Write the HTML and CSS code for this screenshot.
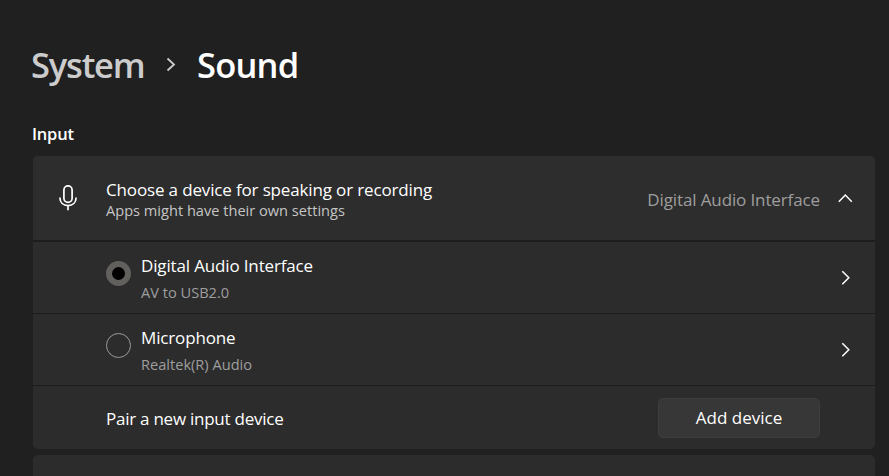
FILE: index.html
```
<!DOCTYPE html>
<html lang="en">
<head>
    <meta charset="UTF-8">
    <meta name="viewport" content="width=device-width, initial-scale=1.0">
    <title>System - Sound</title>
    <link rel="stylesheet" href="styles.css">
</head>
<body>
    <nav class="breadcrumb">
        <span class="crumb">System</span>
        <svg class="crumb-arrow" viewBox="0 0 10 16"><path d="M1.5 1.5 L8 7.5 L1.5 13.5"/></svg>
        <h1 class="crumb current">Sound</h1>
    </nav>

    <h2 class="section-title">Input</h2>

    <div class="card">
        <div class="row row-header">
            <svg class="mic" viewBox="0 0 20 28">
                <rect x="5.9" y="1.9" width="8.2" height="16.4" rx="4.1"/>
                <path d="M1.9 13.5 C1.9 18.6 5.4 21.6 10 21.6 C14.6 21.6 18.1 18.6 18.1 13.5 M10 21.6 V26.3"/>
            </svg>
            <div class="text">
                <div class="title">Choose a device for speaking or recording</div>
                <div class="subtitle">Apps might have their own settings</div>
            </div>
            <span class="selected">Digital Audio Interface</span>
            <svg class="chevron" viewBox="0 0 16 16"><path d="M1.8 11.7 L8.3 5 L14.8 11.7"/></svg>
        </div>

        <div class="row row-device">
            <span class="radio checked"></span>
            <div class="text">
                <div class="title">Digital Audio Interface</div>
                <div class="detail">AV to USB2.0</div>
            </div>
            <svg class="chevron" viewBox="0 0 16 16"><path d="M5.3 1.2 L11.8 7.7 L5.3 14.2"/></svg>
        </div>

        <div class="row row-device">
            <span class="radio"></span>
            <div class="text">
                <div class="title">Microphone</div>
                <div class="detail">Realtek(R) Audio</div>
            </div>
            <svg class="chevron" viewBox="0 0 16 16"><path d="M5.3 1.2 L11.8 7.7 L5.3 14.2"/></svg>
        </div>

        <div class="row row-pair">
            <div class="title pair">Pair a new input device</div>
            <button class="btn">Add device</button>
        </div>
    </div>

    <div class="card next-card"></div>
</body>
</html>
```
FILE: styles.css
```
:root {
    --bg: #202020;
    --card: #2c2c2c;
    --line: #1d1d1d;
    --text: #ffffff;
    --muted: #9e9e9e;
}

* {
    margin: 0;
    padding: 0;
    box-sizing: border-box;
}

body {
    height: 476px;
    overflow: hidden;
    padding: 41px 14px 0 32px;
    background-color: var(--bg);
    color: var(--text);
    font-family: 'Open Sans', 'Noto Sans', sans-serif;
    font-size: 17px;
    white-space: nowrap;
}

svg {
    display: block;
    flex: none;
    fill: none;
    stroke: #fff;
    stroke-width: 1.5;
}

.breadcrumb {
    display: flex;
    align-items: center;
    height: 48px;
}

.crumb {
    width: 135px;
    margin-left: -1px;
    font-size: 34.5px;
    font-weight: 600;
    line-height: 48px;
    letter-spacing: -1.2px;
    color: #cccccc;
}

.crumb.current {
    width: auto;
    margin-left: 0;
    letter-spacing: -0.8px;
    color: var(--text);
}

.crumb-arrow {
    width: 10px;
    height: 16px;
    margin-right: 21px;
    stroke: #cccccc;
    stroke-width: 1.8;
}

.section-title {
    margin: 33px 0 10px;
    font-size: 16.5px;
    font-weight: 600;
    line-height: 24px;
    letter-spacing: -0.2px;
}

.card {
    margin-left: 1px;
    background-color: var(--card);
    border-radius: 5px;
}

.row {
    display: flex;
    align-items: center;
    padding: 0 22px 0 73px;
}

.row-header {
    height: 86px;
    padding-left: 25px;
    border-bottom: 2px solid var(--line);
    background-color: #2d2d2d;
    border-radius: 5px 5px 0 0;
}

.row-device {
    height: 72px;
    border-bottom: 1px solid var(--line);
}

.row-pair {
    height: 63px;
    padding-right: 55px;
    justify-content: space-between;
}

.mic {
    width: 20px;
    height: 28px;
    margin-right: 28px;
    stroke-width: 1.7;
}

.text {
    flex: 1;
}

.title {
    line-height: 24px;
    letter-spacing: -0.15px;
}

.title.pair {
    padding-top: 2px;
    letter-spacing: -0.25px;
}

.subtitle {
    margin-top: -2px;
    font-size: 14.6px;
    line-height: 20px;
    color: #c5c5c5;
}

.row-header .text {
    padding-top: 1px;
}

.row-device .text {
    padding-top: 1px;
}

.detail {
    margin-top: 3px;
    font-size: 14.6px;
    line-height: 22px;
    color: var(--muted);
}

.selected {
    margin-right: 17px;
    padding-top: 2px;
    letter-spacing: -0.12px;
    color: var(--muted);
}

.chevron {
    width: 16px;
    height: 16px;
}

.radio {
    width: 25px;
    height: 25px;
    margin: -8px 10px 0 0;
    border: 1.5px solid #9a9a9a;
    border-radius: 50%;
}

.radio.checked {
    border: 6px solid #62605d;
    background-color: #000;
}

.btn {
    width: 162px;
    height: 40px;
    border: 1px solid #3d3d3d;
    border-radius: 5px;
    background-color: #373737;
    color: var(--text);
    font: inherit;
}

.next-card {
    height: 40px;
    margin-top: 6px;
}
```
